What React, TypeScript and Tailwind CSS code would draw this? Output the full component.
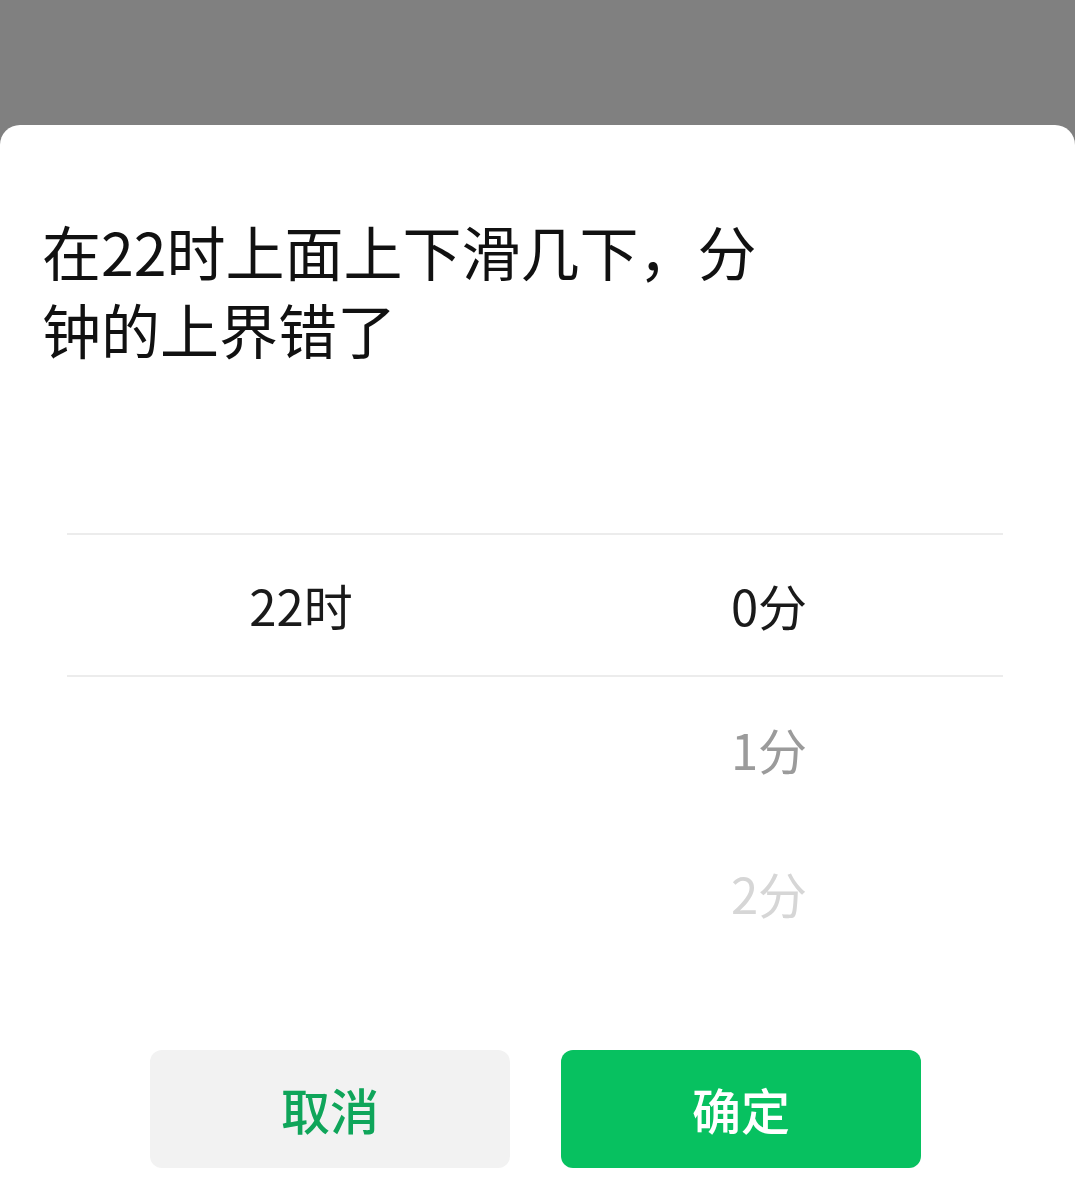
const font = { fontFamily: '"Noto Sans CJK SC", "Noto Sans", sans-serif' };

const rows = [
  { hour: "22时", minute: "0分", tone: "text-[#1a1a1a]" },
  { hour: "", minute: "1分", tone: "text-[#9b9b9b]" },
  { hour: "", minute: "2分", tone: "text-[#d6d6d6]" },
];

export default function App() {
  return (
    <div className="min-h-[1199px] bg-[#808080] pt-[125px]" style={font}>
      <div className="h-[1074px] rounded-t-[20px] bg-white">
        <div className="px-[42px] pt-[87px] text-[59px] leading-[78px] text-[#111111]">
          <div>在22时上面上下滑几下，分</div>
          <div>钟的上界错了</div>
        </div>

        <div className="ml-[67px] mr-[72px] mt-[165px]">
          {rows.map((r, i) => (
            <div
              key={i}
              className={
                i === 0
                  ? "grid h-[144px] grid-cols-2 items-center border-y-2 border-[#ececec] text-[49px]"
                  : "grid h-[144px] grid-cols-2 items-center text-[49px]"
              }
            >
              <span className="text-center text-[#1a1a1a]">{r.hour}</span>
              <span className={`text-center ${r.tone}`}>{r.minute}</span>
            </div>
          ))}
        </div>

        <div className="mt-[85px] flex gap-[51px] pl-[150px]">
          <button
            type="button"
            className="h-[118px] w-[360px] rounded-[12px] bg-[#f2f2f2] text-[49px] font-medium text-[#0fa55a]"
          >
            取消
          </button>
          <button
            type="button"
            className="h-[118px] w-[360px] rounded-[12px] bg-[#07c160] text-[49px] font-medium text-white"
          >
            确定
          </button>
        </div>
      </div>
    </div>
  );
}
